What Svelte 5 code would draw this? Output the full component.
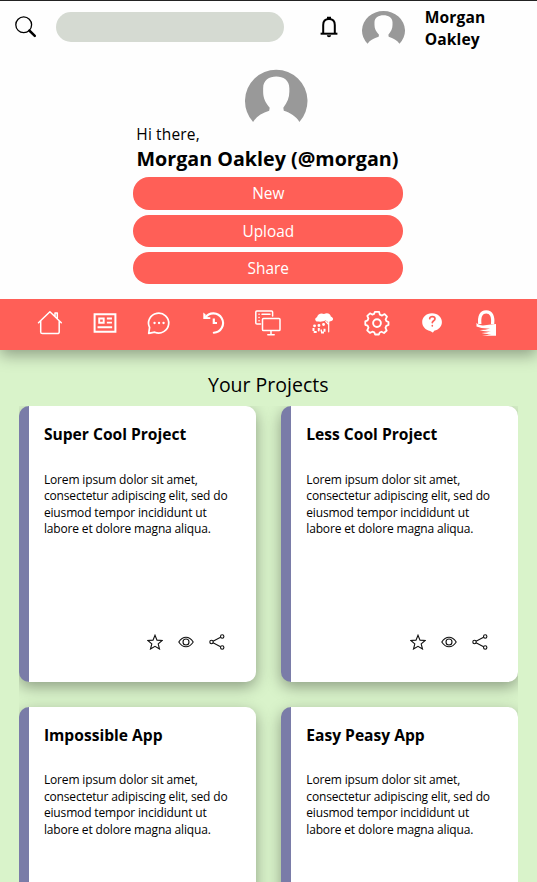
<script>
  const actions = ['New', 'Upload', 'Share'];
  const nav = ['home', 'news', 'messages', 'history', 'devices', 'tree', 'settings', 'help', 'privacy'];
  const projects = ['Super Cool Project', 'Less Cool Project', 'Impossible App', 'Easy Peasy App'];
  const lines = [
    'Lorem ipsum dolor sit amet,',
    'consectetur adipiscing elit, sed do',
    'eiusmod tempor incididunt ut',
    'labore et dolore magna aliqua.'
  ];
</script>

{#snippet avatar()}
  <svg viewBox="0 0 62 54" fill="#999" preserveAspectRatio="none">
    <path d="M8 53.5A31 31 0 1 1 54 53.5C50.5 48 45 44.500 38.500 42.500L38 39.500C42 34 44 29.500 44 23.500V20C44 12 38 8.500 31 8.500S18 12 18 20V23.500C18 29.500 20 34 24.500 39.500L24 42.500C17 44.500 11.500 48 8 53.500Z" />
  </svg>
{/snippet}

{#snippet navIcon(name)}
  <svg viewBox="0 0 26 26" width="26" height="26" fill="none" stroke="#fff" stroke-width="1.7" stroke-linecap="round" stroke-linejoin="round">
    {#if name === 'home'}
      <path d="M1.500 12.800 12.900 1.800 24.300 12.800M3.700 11V22Q3.700 23.600 5.500 23.600H20.300Q22.200 23.600 22.200 22V11M18 6.500V3H20.300V9" stroke-width="1.500" />
    {:else if name === 'news'}
      <path d="M2.600 4.200H23.400V21.800H2.600Z" stroke-width="2" stroke-linejoin="miter" />
      <path d="M7.200 8.500H11.700V12.800H7.200ZM15.800 8.500H19M15.800 12.600H19M6.500 17.200H19.200" stroke-width="1.900" stroke-linecap="square" stroke-linejoin="miter" />
    {:else if name === 'messages'}
      <path d="M2.700 23.300 3.600 17.500A10.100 9.900 0 1 1 8.700 22.200Z" stroke-width="1.700" />
      <path d="M8.500 13H8.600M13 13H13.100M17.500 13H17.600" stroke-width="2.300" />
    {:else if name === 'history'}
      <path d="M4.200 7.800A9.700 9.700 0 1 1 12.800 22.800" stroke-width="2.100" />
      <path d="M12.800 8.500V13H16" stroke-width="2.200" stroke-linecap="butt" stroke-linejoin="miter" />
      <path d="M2.300 2.500 4.700 4.500 4.600 6.900 9.300 7.300V9H2.300Z" fill="#fff" stroke="none" />
    {:else if name === 'devices'}
      <path d="M5.500 14H2Q.8 14 .8 13V2Q.8 1 1.800 1H16.500Q17.600 1 17.600 2V6M4 4.200H4.100M7 4.200H15M4 7.500H4.100M4 10.700H4.100M7.500 10V9.500Q7.500 8.600 8.500 8.600H24Q25 8.600 25 9.600V19.500Q25 20.600 24 20.600H8.500Q7.500 20.600 7.500 19.500ZM16 21V24.500M12.800 24.700H19.200" stroke-width="1.500" />
    {:else if name === 'tree'}
      <path d="M6.500 11.500C4.500 10 5 7.900 7 7.300 7.500 3.600 11.500 2.600 14 4 18 2.100 20.500 4.500 20.800 6.500 24 7.500 23.700 11 20.500 11.200L18 12 15.500 10.300C13 12.200 9.500 11.600 6.500 11.500Z" fill="#fff" stroke="none" />
      <path d="M18.700 11V21.800M18.700 14.700 15.800 11.500" stroke-width="1.200" />
      <path d="M4.500 15.800H4.600M8.900 15.500H9M13.500 14.500H13.600" stroke-width="2.800" />
      <path d="M3.500 18V22H7M8.800 18V20.500H12M11 22.500H14.500V18" stroke-width="2" stroke-dasharray="3 1.200" stroke-linecap="butt" />
    {:else if name === 'settings'}
      <path d="M10.900 1.800H15.100L15.800 4.600 18.100 5.600 20.600 4.100 23 6.700 21.600 9.400 22.400 11.200 24.500 12V15L22.300 15.800 21.500 17.800 22.700 20.500 20 23 17.500 21.700 15.700 22.500 14.900 24.500H11.100L10.300 22.400 8.400 21.700 5.900 22.900 3.200 20.300 4.500 17.600 3.600 15.700 1.300 14.800V11.300L3.600 10.300 4.400 8.300 3.300 5.800 6 3.300 8.200 4.600 10.100 3.900Z" stroke-width="1.800" />
      <circle cx="13" cy="13.100" r="3.900" stroke-width="1.900" />
    {:else if name === 'help'}
      <path d="M13 3.300C19 3.300 22.900 7.500 22.900 12S19.500 20 15.200 20.800L14 22.500Q13.500 22.900 13.500 22.200L11 20.900C6.500 20.200 3.200 16.500 3.200 12S7 3.300 13 3.300Z" fill="#fff" stroke="none" />
      <path d="M10.700 8.700C10.500 5.800 16 5.800 16 8.700 16 10.800 13.400 10.600 13.300 12.600M13.300 15.700V15.800" stroke="#ff5f57" stroke-width="1.700" />
    {:else}
      <path d="M6.800 14.200Q5.600 1.900 13.200 1.900T19.600 14.200" stroke-width="3.300" stroke-linecap="butt" />
      <path d="M3.500 12.700Q6 16 12 15.300T23 14V25.800H9Q15 25.300 18.500 24Q13 24.500 8.500 23Q14 22.800 18 21.300Q11 22 6.500 20Q12 20.100 17 18.500Q9 19 3.500 16.500Z" fill="#fff" stroke="none" />
    {/if}
  </svg>
{/snippet}

<div class="page">
  <header>
    <div class="top">
      <svg class="search" viewBox="0 0 22 22" width="22" height="22" fill="none" stroke="#000">
        <circle cx="8.700" cy="8.800" r="7.900" stroke-width="1.300" />
        <path d="m14.300 14.500 5.500 5.300" stroke-width="2.500" stroke-linecap="round" />
      </svg>
      <div class="field"></div>
      <svg class="bell" viewBox="0 0 18 22" width="18" height="22" fill="none" stroke="#000">
        <path d="M3.200 17.500V9Q3.200 3 9 3T14.800 9V17.500" stroke-width="2" />
        <path d="M.6 17.700H17.400" stroke-width="2" />
        <path d="M7 .8H11V3H7ZM6.800 19.200H11.200Q11 21.200 9 21.200T6.800 19.200Z" fill="#000" stroke="none" />
      </svg>
      <div class="small-avatar">{@render avatar()}</div>
      <div class="user">Morgan<br />Oakley</div>
    </div>
    <div class="profile">
      <div class="big-avatar">{@render avatar()}</div>
      <div class="greeting">Hi there,</div>
      <div class="full">Morgan Oakley (@morgan)</div>
      <div class="actions">
        {#each actions as label}
          <button>{label}</button>
        {/each}
      </div>
    </div>
  </header>
  <nav>
    {#each nav as name}
      <span>{@render navIcon(name)}</span>
    {/each}
  </nav>
  <main>
    <h2>Your Projects</h2>
    <div class="grid">
      {#each projects as title}
        <article>
          <h3>{title}</h3>
          <p>
            {#each lines as line}<span>{line}</span>{/each}
          </p>
          <div class="tools">
            <svg viewBox="0 0 16 16" width="16" height="16"><path d="m8 1.200 2 4.900 5.200.3-4 3.500 1.300 5.100L8 12.300 3.500 15l1.300-5.100-4-3.500L6 6.100Z" /></svg>
            <svg viewBox="0 0 16 16" width="16" height="16"><path d="M.8 8Q3.800 3.200 8 3.200T15.200 8Q12.200 12.800 8 12.800T.8 8Z" /><circle cx="8" cy="8" r="3" /></svg>
            <svg viewBox="0 0 16 16" width="16" height="16"><path d="M4 7.200 11.600 3.300M4 8.700 11.600 12.700" /><circle cx="2.500" cy="8" r="1.700" /><circle cx="13.200" cy="2.500" r="1.700" /><circle cx="13.200" cy="13.500" r="1.700" /></svg>
          </div>
        </article>
      {/each}
    </div>
  </main>
</div>

<style>
  .page {
    height: 882px;
    overflow: hidden;
    display: flex;
    flex-direction: column;
    background: #d9f3ca;
    color: #000;
    font-family: 'Open Sans', 'Noto Sans', sans-serif;
  }
  header {
    position: relative;
    z-index: 2;
    box-sizing: border-box;
    flex: none;
    height: 299.400px;
    background: #fefefe;
    border-top: 1px solid #222;
  }
  svg { display: block; }
  .top {
    display: flex;
    align-items: flex-start;
    height: 67px;
    padding-left: 15px;
  }
  .search { margin-top: 15px; }
  .field {
    width: 227.500px;
    height: 30px;
    margin: 10.700px 0 0 19px;
    border-radius: 15px;
    background: #d5dad2;
  }
  .bell { margin: 15px 0 0 36px; }
  .small-avatar { width: 43px; margin: 9px 0 0 24.300px; }
  .small-avatar :global(svg) { width: 43px; height: 34px; }
  .user {
    margin: 5px 0 0 20px;
    font-size: 15.600px;
    font-weight: 700;
    line-height: 22px;
    letter-spacing: .1px;
  }
  .profile {
    width: 270px;
    margin: 0 auto 0 133.300px;
    display: flex;
    flex-direction: column;
  }
  .big-avatar { width: 62.500px; align-self: center; margin-left: 16px; }
  .greeting {
    margin: 1px 0 0 3px;
    font-size: 15.500px;
    line-height: 22px;
    letter-spacing: .15px;
  }
  .full {
    margin-left: 3.200px;
    font-size: 19.700px;
    font-weight: 700;
    line-height: 28px;
    white-space: nowrap;
  }
  .actions { display: flex; flex-direction: column; gap: 5.300px; margin-top: 4px; }
  button {
    height: 32.100px;
    padding: 2px 0 0;
    border: 0;
    border-radius: 16px;
    background: #ff5f57;
    color: #fff;
    font: 15.400px/28px 'Open Sans', 'Noto Sans', sans-serif;
  }
  nav {
    position: relative;
    z-index: 1;
    box-sizing: border-box;
    flex: none;
    display: flex;
    height: 50.800px;
    padding: 10.600px 0 0 23px;
    background: #ff5f57;
    box-shadow: 0 5px 15px rgba(0, 0, 0, .35);
  }
  nav span { width: 54.500px; display: flex; justify-content: center; }
  main { flex: 1; min-height: 0; display: flex; flex-direction: column; padding: 0 19px 0 18.500px; }
  h2 {
    margin: 20px 0 0;
    padding-top: 1px;
    text-align: center;
    font-size: 19.500px;
    font-weight: 400;
    line-height: 28px;
    height: 36px;
    box-sizing: border-box;
  }
  .grid {
    flex: 1;
    min-height: 0;
    overflow: hidden;
    display: grid;
    grid-template-columns: repeat(2, minmax(0, 1fr));
    grid-auto-rows: 275.500px;
    gap: 25.300px;
  }
  article {
    box-sizing: border-box;
    display: flex;
    flex-direction: column;
    padding: 18px 30.500px 31.300px 15.400px;
    border-left: 10px solid #7a7ca8;
    border-radius: 10px;
    background: #fff;
    box-shadow: 0 5px 15px rgba(0, 0, 0, .35);
  }
  h3 {
    margin: 0 0 26.500px;
    font-size: 15.600px;
    font-weight: 700;
    line-height: 21px;
    white-space: nowrap;
  }
  p { margin: 0; font-size: 12px; line-height: 16.400px; letter-spacing: -.15px; }
  p span { display: block; white-space: nowrap; }
  .tools { display: flex; justify-content: flex-end; gap: 15px; margin-top: auto; }
  .tools svg { fill: none; stroke: #111; stroke-width: 1.100; }
</style>
